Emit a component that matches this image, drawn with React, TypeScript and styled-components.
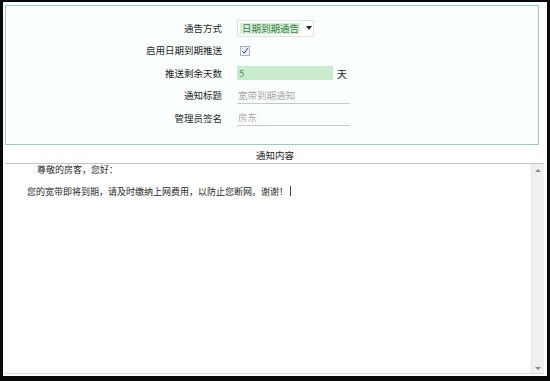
import React from "react";
import styled, { createGlobalStyle } from "styled-components";

const Global = createGlobalStyle`
  html, body { margin: 0; padding: 0; background: #ffffff; }
  body { font-family: "Noto Sans CJK SC", "Noto Sans", sans-serif; }
  * { box-sizing: border-box; }
`;

const Frame = styled.div`
  width: 550px;
  height: 381px;
  border-style: solid;
  border-color: #0a0a0a;
  border-width: 2px 3px 5px 3px;
  padding: 3px 3px 0 2px;
  display: flex;
  flex-direction: column;
  background: #ffffff;
  color: #333;
`;

const SettingsPanel = styled.section`
  width: 534px;
  border: 1px solid #8fcfc8;
  background: #fbfefe;
  padding: 11px 0 14px 0;
  display: grid;
  grid-template-columns: 216px 1fr;
  grid-auto-rows: 22.5px;
  column-gap: 15px;
  align-items: center;
`;

const Label = styled.div`
  text-align: right;
  font-size: 9.5px;
  color: #1f1f1f;
  line-height: 1;
  white-space: nowrap;
`;

const Control = styled.div`
  display: flex;
  align-items: center;
  gap: 4px;
  height: 100%;
`;

const SelectBox = styled.div`
  width: 77px;
  height: 17px;
  border: 1px solid #e2e2e2;
  background: #fff;
  display: flex;
  align-items: center;
  padding: 0 2px;
  gap: 6px;
`;

const SelectValue = styled.span`
  background: #d4efd6;
  color: #3f7f4a;
  font-size: 9.5px;
  line-height: 11px;
  padding: 0 2px;
  width: 60px;
  white-space: nowrap;
`;

const Arrow = styled.span`
  width: 0;
  height: 0;
  border-left: 3px solid transparent;
  border-right: 3px solid transparent;
  border-top: 4px solid #222;
`;

const Check = styled.span`
  width: 10px;
  height: 10px;
  margin-left: 3px;
  border: 1px solid #a9b3c8;
  background: #eef1f8;
  display: flex;
  align-items: center;
  justify-content: center;
`;

const NumberField = styled.div`
  width: 96px;
  height: 14px;
  background: #c9eccd;
  color: #5c8a5c;
  font-size: 9.5px;
  line-height: 14px;
  padding-left: 2px;
`;

const Unit = styled.span`
  font-size: 10px;
  color: #222;
`;

const LineField = styled.div`
  width: 113px;
  height: 16px;
  border-bottom: 1px solid #c9c9c9;
  color: #a8a8a8;
  font-size: 9.5px;
  line-height: 15px;
  padding-left: 1px;
`;

const SectionTitle = styled.div`
  text-align: center;
  font-size: 9.5px;
  color: #222;
  height: 18px;
  line-height: 20px;
  width: 540px;
`;

const Editor = styled.div`
  flex: 1;
  width: 539px;
  margin-bottom: 2px;
  border-top: 1px solid #c4c4c4;
  border-bottom: 1px solid #dcdcdc;
  display: flex;
`;

const EditorBody = styled.div`
  flex: 1;
  padding: 0 0 0 22px;
  font-size: 9px;
  color: #1f1f1f;
  line-height: 11px;
`;

const Para = styled.p<{ $indent?: number }>`
  margin: 0 0 11px 0;
  padding-left: ${(p) => p.$indent ?? 0}px;
  white-space: nowrap;
`;

const Caret = styled.span`
  display: inline-block;
  width: 1px;
  height: 10px;
  background: #444;
  margin-left: 2px;
  vertical-align: -1px;
`;

const Scrollbar = styled.div`
  width: 13px;
  background: #f0f0f0;
  border-left: 1px solid #e4e4e4;
  display: flex;
  flex-direction: column;
  justify-content: space-between;
  align-items: center;
  padding: 5px 0 3px 0;
`;

const ScrollArrow = styled.span<{ $down?: boolean }>`
  width: 0;
  height: 0;
  border-left: 3px solid transparent;
  border-right: 3px solid transparent;
  ${(p) =>
    p.$down
      ? "border-top: 3px solid #8a8a8a;"
      : "border-bottom: 3px solid #8a8a8a;"}
`;

export default function App() {
  return (
    <>
      <Global />
      <Frame>
        <SettingsPanel>
          <Label>通告方式</Label>
          <Control>
            <SelectBox>
              <SelectValue>日期到期通告</SelectValue>
              <Arrow />
            </SelectBox>
          </Control>

          <Label>启用日期到期推送</Label>
          <Control>
            <Check>
              <svg width="8" height="8" viewBox="0 0 8 8">
                <path d="M1.5 4.2 L3.2 6.2 L6.8 1.2" fill="none" stroke="#2b3a6b" strokeWidth="1" />
              </svg>
            </Check>
          </Control>

          <Label>推送剩余天数</Label>
          <Control>
            <NumberField>5</NumberField>
            <Unit>天</Unit>
          </Control>

          <Label>通知标题</Label>
          <Control>
            <LineField>宽带到期通知</LineField>
          </Control>

          <Label>管理员签名</Label>
          <Control>
            <LineField>房东</LineField>
          </Control>
        </SettingsPanel>

        <SectionTitle>通知内容</SectionTitle>

        <Editor>
          <EditorBody>
            <Para $indent={10}>尊敬的房客，您好：</Para>
            <Para>
              您的宽带即将到期，请及时缴纳上网费用，以防止您断网。谢谢！
              <Caret />
            </Para>
          </EditorBody>
          <Scrollbar>
            <ScrollArrow />
            <ScrollArrow $down />
          </Scrollbar>
        </Editor>
      </Frame>
    </>
  );
}
